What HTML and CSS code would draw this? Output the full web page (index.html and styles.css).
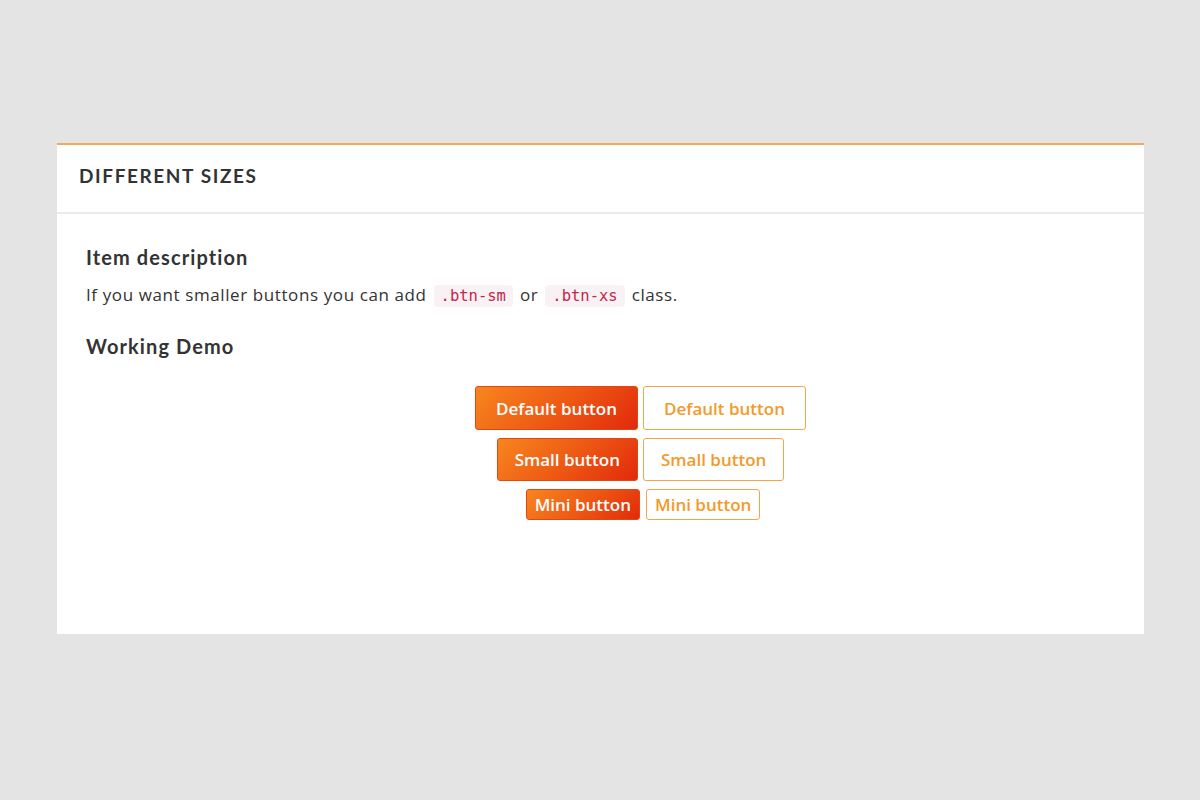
FILE: index.html
```html
<!DOCTYPE html>
<html>
<head>
<meta charset="utf-8">
<link rel="stylesheet" href="styles.css">
</head>
<body>
<div class="page">
  <section class="card">
    <header class="card-header">
      <h2 class="card-title">Different sizes</h2>
    </header>
    <div class="card-body">
      <h3 class="sub">Item description</h3>
      <p class="desc">If you want smaller buttons you can add <code>.btn-sm</code> or <code>.btn-xs</code> class.</p>
      <h3 class="sub demo-title">Working Demo</h3>
      <div class="demo">
        <div class="row">
          <button class="btn btn-solid">Default button</button>
          <button class="btn btn-outline">Default button</button>
        </div>
        <div class="row">
          <button class="btn btn-solid btn-sm">Small button</button>
          <button class="btn btn-outline btn-sm">Small button</button>
        </div>
        <div class="row row-xs">
          <button class="btn btn-solid btn-xs">Mini button</button>
          <button class="btn btn-outline btn-xs">Mini button</button>
        </div>
      </div>
    </div>
  </section>
</div>
</body>
</html>
```

FILE: styles.css
```css
html, body {
  margin: 0;
  padding: 0;
  background: #e4e4e4;
  font-family: "Open Sans", "Noto Sans", sans-serif;
  color: #333;
}
.page {
  padding: 143px 56px 0 57px;
}
.card {
  background: #fff;
  border-top: 2px solid #f5a95a;
  height: 491px;
  box-sizing: border-box;
}
.card-header {
  height: 69px;
  border-bottom: 2px solid #ebebeb;
  box-sizing: border-box;
  display: flex;
  align-items: center;
  padding: 0 0 7px 22px;
}
.card-title {
  margin: 0;
  font-family: "Lato", sans-serif;
  font-size: 19px;
  font-weight: 700;
  letter-spacing: 1.6px;
  text-transform: uppercase;
  color: #333;
}
.card-body {
  padding: 30px 29px;
}
.sub {
  margin: 0;
  font-family: "Lato", sans-serif;
  font-size: 20px;
  font-weight: 700;
  color: #333;
  line-height: 26px;
  letter-spacing: 1.1px;
}
.desc {
  margin: 13px 0 0;
  font-size: 17px;
  line-height: 24px;
  color: #333;
  letter-spacing: 0.6px;
}
code {
  font-family: "DejaVu Sans Mono", monospace;
  font-size: 15.5px;
  letter-spacing: 0;
  color: #c7254e;
  background: #f9f2f4;
  border-radius: 4px;
  padding: 2px 7px;
  margin: 0 2px;
}
.demo-title {
  margin-top: 25px;
}
.demo {
  display: flex;
  flex-direction: column;
  align-items: center;
  gap: 8px;
  margin-top: 27px;
  padding-left: 80px;
}
.row {
  display: flex;
  gap: 5px;
}
.row-xs {
  gap: 6px;
  padding-left: 5px;
}
.btn {
  font-family: "Open Sans", sans-serif;
  font-size: 17px;
  font-weight: 600;
  border-radius: 3px;
  box-sizing: border-box;
  height: 44px;
  padding: 0 20px;
  cursor: pointer;
}
.btn-solid {
  color: #fff;
  border: 1px solid #e3460f;
  background: linear-gradient(135deg, #f7861f 0%, #ee5a14 50%, #e22a0c 100%);
}
.btn-outline {
  color: #f39a2b;
  background: #fff;
  border: 1px solid #f5a545;
}
.btn-sm {
  height: 43px;
  padding: 0 17px;
}
.btn-xs {
  height: 31px;
  padding: 0 8px;
}
```
